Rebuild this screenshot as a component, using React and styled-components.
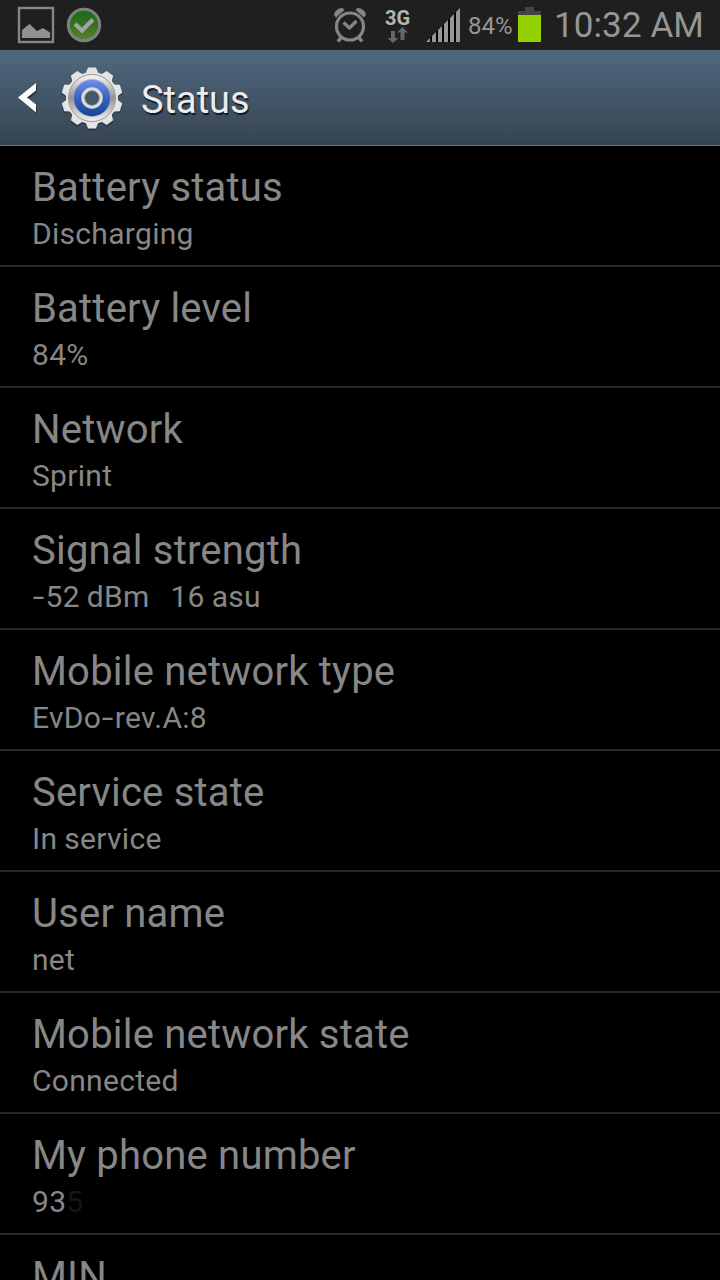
import styled, { createGlobalStyle } from "styled-components";

const GlobalStyle = createGlobalStyle`
        body {
            margin: 0;
            background: #000;
            font-family: Roboto, "Liberation Sans", sans-serif;
        }
        `;

const Screen = styled.div`
        width: 720px;
        height: 1280px;
        overflow: hidden;
        background: #000;
        display: flex;
        flex-direction: column;
        `;

const StatusBar = styled.div`
        height: 50px;
        flex: none;
        display: flex;
        justify-content: space-between;
        background: #1f1f1f;
        color: #969696;
        white-space: nowrap;
        `;

const BarGroup = styled.div`
        display: flex;
        align-items: flex-start;
        `;

const BarIcon = styled.svg`
        display: block;
        flex: none;
        `;

const NetworkType = styled.div`
        width: 27px;
        margin: 0 15px 0 17px;
        padding-top: 9px;
        display: flex;
        flex-direction: column;
        align-items: center;
        color: #b4b4b4;
        font-size: 20px;
        font-weight: 700;
        line-height: 18px;
        `;

const BatteryText = styled.span`
        width: 45px;
        margin-left: 8px;
        font-size: 24px;
        line-height: 52px;
        `;

const Clock = styled.span`
        width: 166px;
        margin-left: 13px;
        font-size: 35px;
        line-height: 51px;
        letter-spacing: 0.1px;
        `;

const ActionBar = styled.header`
        box-sizing: border-box;
        height: 96px;
        flex: none;
        display: flex;
        align-items: center;
        padding-left: 17px;
        background: linear-gradient(#50687f, #364450);
        border-bottom: 1px solid #5b7488;
        `;

const GearBox = styled(BarIcon)`
        margin-left: 18px;
        `;

const Heading = styled.h1`
        margin: 5px 0 0 16px;
        color: #ececec;
        font-size: 38px;
        font-weight: 400;
        line-height: 48px;
        text-shadow: 1px 2px 1px #10171d;
        `;

const List = styled.ul`
        margin: 0;
        padding: 0;
        list-style: none;
        `;

const Row = styled.li`
        box-sizing: border-box;
        height: 121px;
        padding: 18px 32px 0;
        border-bottom: 2px solid #282828;
        color: #878787;
        white-space: pre;
        `;

const Title = styled.div`
        font-size: 40px;
        line-height: 48px;
        letter-spacing: 0.2px;
        `;

const Summary = styled.div`
        margin-top: 4px;
        font-size: 30px;
        line-height: 36px;
        letter-spacing: 0.3px;
        word-spacing: -0.8px;
        `;

const Hyphen = styled.span`
        display: inline-block;
        width: 13.5px;
        text-align: center;
        transform: scaleX(1.4);
        `;

const Faded = styled.span`
        color: #151515;
        `;

const rows = [
    { title: "Battery status", summary: "Discharging" },
    { title: "Battery level", summary: "84%" },
    { title: "Network", summary: "Sprint" },
    { title: "Signal strength", summary: "-52 dBm   16 asu" },
    { title: "Mobile network type", summary: "EvDo-rev.A:8" },
    { title: "Service state", summary: "In service" },
    { title: "User name", summary: "net" },
    { title: "Mobile network state", summary: "Connected" },
    { title: "My phone number", summary: "93", faded: "5" },
    { title: "MIN", summary: "" },
];

// hyphens are drawn wider than the font has them
const widenHyphens = (text) =>
    text.split(/(-)/).map((part, i) => (part === "-" ? <Hyphen key={i}>-</Hyphen> : part));

const PictureIcon = () => (
    <BarIcon width="60" height="50">
        <rect x="19" y="8" width="34" height="34" fill="none" stroke="#868686" strokeWidth="2.4" />
        <path d="M22 38V30L29.500 24L37 31L43 28L50 32.500V38Z" fill="#919191" />
    </BarIcon>
);

const CheckIcon = () => (
    <BarIcon width="50" height="50">
        <defs>
            <linearGradient id="checkFill" x1="0" y1="0" x2="0" y2="1">
                <stop offset="0" stopColor="#176b1c" />
                <stop offset="0.5" stopColor="#34731f" />
                <stop offset="1" stopColor="#5c8130" />
            </linearGradient>
        </defs>
        <circle cx="24" cy="25" r="15.7" fill="url(#checkFill)" stroke="#808080" strokeWidth="3" />
        <path d="M15 24L22 30.500L33 19.500" fill="none" stroke="#a3a3a3" strokeWidth="4.2" />
    </BarIcon>
);

const AlarmIcon = () => (
    <BarIcon width="34" height="50" fill="none" stroke="#858585">
        <circle cx="17" cy="26.5" r="13.5" strokeWidth="3.2" />
        <path d="M10.5 22.5L16.5 28L23.5 21" strokeWidth="3.4" />
        <path d="M8 37.500L5 41.500M26 37.500L29 41.500" strokeWidth="3.6" />
        <path d="M1 15C1.500 11 5 8 9.500 8L11.500 10L3 17.500Z M33 15C32.500 11 29 8 24.500 8L22.500 10L31 17.500Z" fill="#858585" stroke="none" />
    </BarIcon>
);

const DataArrows = () => (
    <BarIcon width="22" height="16" fill="#666">
        <path d="M4 4H8V11H11.500L6 16L0.500 11H4Z" />
        <path d="M13.500 13V5.500H10L15.500 0L21 5.500H17.500V13Z" />
    </BarIcon>
);

const SignalIcon = () => (
    <BarIcon width="34" height="50">
        <path d="M0 42L34 8V42Z" fill="#000" />
        <path
            d="M0 42L4 38V42ZM6 42V36L10 32V42ZM12 42V30L16 26V42ZM18 42V24L22 20V42ZM24 42V18L28 14V42ZM30 42V12L34 8V42Z"
            fill="#969696"
        />
    </BarIcon>
);

const BatteryIcon = () => (
    <BarIcon width="28" height="50">
        <path d="M12 7H21V11H28V15H5V11H12Z" fill="#444" />
        <rect x="5" y="15" width="23" height="27" fill="#92d000" />
    </BarIcon>
);

const BackIcon = () => (
    <BarIcon width="24" height="40">
        <path d="M20 7L3 21.500L20 36V28.500L11 21.500L20 14Z" fill="#17212a" opacity=".65" />
        <path d="M19 5L1 19.500L19 34.500V26.500L10 19.500L19 12.500Z" fill="#fff" />
    </BarIcon>
);

const teeth = [0, 36, 72, 108, 144, 180, 216, 252, 288, 324];

const GearIcon = () => (
    <GearBox width="66" height="70" viewBox="-33 -35 66 70">
        <defs>
            <linearGradient id="gearRim" x1="0" y1="0" x2="0" y2="1">
                <stop offset="0" stopColor="#fafafa" />
                <stop offset="0.5" stopColor="#929292" />
                <stop offset="1" stopColor="#f4f4f4" />
            </linearGradient>
            <linearGradient id="gearBlue" x1="0" y1="0" x2="0" y2="1">
                <stop offset="0" stopColor="#7093ed" />
                <stop offset="0.5" stopColor="#3862c1" />
                <stop offset="1" stopColor="#164592" />
            </linearGradient>
        </defs>
        <g fill="#202b34" opacity=".6" transform="translate(0 1.5)">
            <circle r="26" />
            {teeth.map((angle) => (
                <path key={angle} d="M-6.500 -24L-4 -31H4L6.500 -24Z" transform={`rotate(${angle})`} />
            ))}
        </g>
        <g fill="#e4e4e4">
            <circle r="26" />
            {teeth.map((angle) => (
                <path key={angle} d="M-6.500 -24L-4 -30.500H4L6.500 -24Z" transform={`rotate(${angle})`} />
            ))}
        </g>
        <circle r="23.500" fill="url(#gearRim)" stroke="#999" strokeWidth="1" />
        <circle r="18.500" fill="url(#gearBlue)" stroke="#a9afc0" strokeWidth="0.600" />
        <circle r="9" fill="#45596b" stroke="#dcdcdc" strokeWidth="3.500" />
        <circle r="7.400" fill="none" stroke="#858b91" strokeWidth="0.800" />
    </GearBox>
);

const App = () => {
    return (
        <Screen>
            <GlobalStyle />

            <StatusBar>
                <BarGroup>
                    <PictureIcon />
                    <CheckIcon />
                </BarGroup>
                <BarGroup>
                    <AlarmIcon />
                    <NetworkType>
                        3G
                        <DataArrows />
                    </NetworkType>
                    <SignalIcon />
                    <BatteryText>84%</BatteryText>
                    <BatteryIcon />
                    <Clock>10:32 AM</Clock>
                </BarGroup>
            </StatusBar>

            <ActionBar>
                <BackIcon />
                <GearIcon />
                <Heading>Status</Heading>
            </ActionBar>

            <List>
                {rows.map((row) => (
                    <Row key={row.title}>
                        <Title>{row.title}</Title>
                        <Summary>
                            {widenHyphens(row.summary)}
                            {row.faded && <Faded>{row.faded}</Faded>}
                        </Summary>
                    </Row>
                ))}
            </List>
        </Screen>
    );
};

export default App;
